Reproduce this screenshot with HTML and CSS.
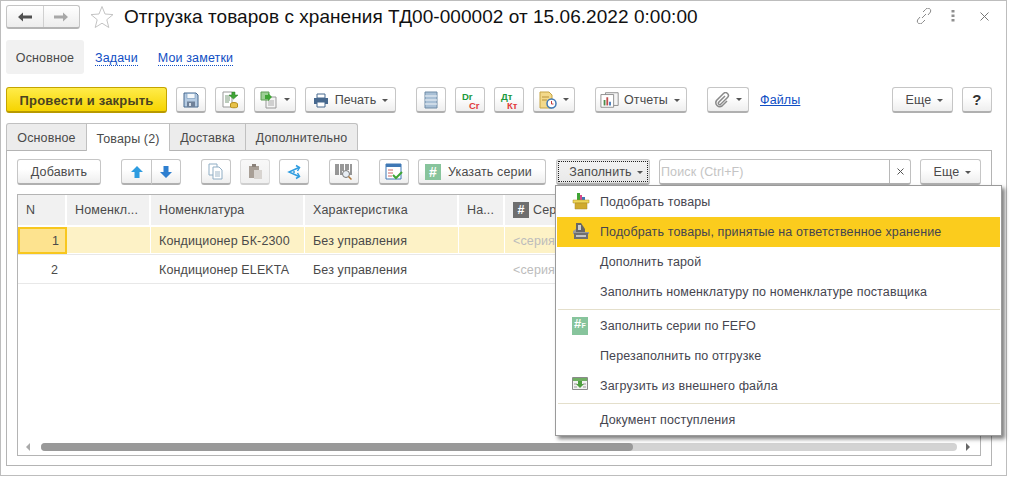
FILE: index.html
```html
<!DOCTYPE html>
<html lang="ru">
<head>
<meta charset="utf-8">
<title>Отгрузка товаров с хранения</title>
<link rel="stylesheet" href="styles.css">
</head>
<body>
<div class="window">
  <header class="head">
    <div class="nav">
      <button class="nav-b"><svg width="16" height="12" viewBox="0 0 16 12"><path d="M1 6l5-4.500V4.500h9v3H6v3z" fill="#505050"/></svg></button>
      <button class="nav-b"><svg width="16" height="12" viewBox="0 0 16 12"><path d="M15 6l-5-4.500V4.500H1v3h9v3z" fill="#a8a8a8"/></svg></button>
    </div>
    <svg class="star" width="24" height="24" viewBox="0 0 24 24"><path d="M12 1.500l3 7.500 8 .6-6.200 5.100 2 7.800L12 18.200 5.200 22.500l2-7.800L1 9.600l8-.6z" fill="#fff" stroke="#c4c4c4"/></svg>
    <h1 class="title">Отгрузка товаров с хранения ТД00-000002 от 15.06.2022 0:00:00</h1>
    <div class="head-tools">
      <svg width="16" height="16" viewBox="0 0 16 16" fill="none" stroke="#8a8a8a"><path d="M6 10l4-4M7 4l2.500-2.500a2.800 2.800 0 0 1 5 2.500L12 7M9 12l-2.500 2.500a2.800 2.800 0 0 1-5-2.500L4 9"/></svg>
      <svg class="dots" width="4" height="12" viewBox="0 0 4 12"><path d="M.5 0h3v2.500h-3zM.5 4.500h3V7h-3zM.5 9h3v2.500h-3z" fill="#8f8f8f"/></svg>
      <svg width="9" height="9" viewBox="0 0 9 9" stroke="#777" fill="none"><path d="M.5.500l8 8M8.500.500l-8 8"/></svg>
    </div>
  </header>

  <nav class="pages">
    <span class="page-cur">Основное</span>
    <a class="page-link page-a">Задачи</a>
    <a class="page-link page-b">Мои заметки</a>
  </nav>

  <div class="cmdbar">
    <button class="btn primary">Провести и закрыть</button>
    <button class="btn ico g9"><svg width="16" height="16" viewBox="0 0 16 16"><path d="M1 1h12l2 2v12H1z" fill="#b5cbe2" stroke="#47688e"/><path d="M4 1.500h8v5H4z" fill="#f4f8fb" stroke="#6f93bb" stroke-width=".6"/><path d="M4 9.500h8V15H4z" fill="#6f8199"/><path d="M6 11h2v3H6z" fill="#d5dee8"/></svg></button>
    <button class="btn ico g9"><svg width="18" height="18" viewBox="0 0 18 18"><path d="M2 1h9v15H2z" fill="#fff" stroke="#999"/><path d="M4 5h5M4 7h5M4 9h5M4 11h4" stroke="#7a9a7a"/><ellipse cx="13" cy="13" rx="3.500" ry="1.500" fill="#e8c24a" stroke="#b58f1c"/><path d="M9.500 13v3c0 1 7 1 7 0v-3" fill="#e8c24a" stroke="#b58f1c"/><path d="M9 1h3v3h3l-4.500 4L6 4h3z" fill="#3fa535" stroke="#2b7d24" stroke-width=".5" transform="translate(2 0)"/></svg></button>
    <button class="btn ico dd g9"><svg width="18" height="18" viewBox="0 0 18 18"><path d="M6 6h10v11H6z" fill="#f4f4f4" stroke="#999"/><path d="M8 10h6M8 12h6M8 14h6" stroke="#aaa"/><path d="M1 1h8v8H1z" fill="#9ccf94" stroke="#5f9d55"/><path d="M5 4h3V2l4 4-4 4V8H5z" fill="#3fa535"/></svg><i class="caret"></i></button>
    <button class="btn txt dd g9 w-print"><svg width="16" height="15" viewBox="0 0 16 15"><path d="M4 1h8v4H4z" fill="#fff" stroke="#47688e"/><path d="M1 5h14v6H1z" fill="#47688e"/><path d="M4 9h8v5H4z" fill="#fff" stroke="#47688e"/></svg>Печать<i class="caret"></i></button>
    <button class="btn ico g20"><svg width="14" height="18" viewBox="0 0 14 18"><path d="M1 1h12v16H1z" fill="#a9c0d6" stroke="#6f8ba6"/><path d="M1 5h12M1 9h12M1 13h12" stroke="#f2f6f9"/></svg></button>
    <button class="btn ico g9"><svg width="24" height="22" viewBox="0 0 24 22"><text class="dc g" x="4" y="10.500">Dr</text><text class="dc r" x="11" y="19.500">Cr</text></svg></button>
    <button class="btn ico g9"><svg width="24" height="22" viewBox="0 0 24 22"><text class="dc g" x="4" y="10.500">Дт</text><text class="dc r" x="10" y="19.500">Кт</text></svg></button>
    <button class="btn ico dd g9"><svg width="18" height="18" viewBox="0 0 18 18"><path d="M1 1h9l3 3v13H1z" fill="#f3d98a" stroke="#c6a444"/><path d="M3 6h7M3 9h5" stroke="#b8923a"/><circle cx="12.500" cy="12.500" r="4.500" fill="#fff" stroke="#3f78b5" stroke-width="1.500"/><path d="M12.500 10v3h2" stroke="#c43c3c" fill="none"/></svg><i class="caret"></i></button>
    <button class="btn txt dd g20 w-rep"><svg width="20" height="18" viewBox="0 0 22 18"><path d="M6 1h14v14H6z" fill="#f5f5f5" stroke="#8a8a8a"/><path d="M1 3h14v14H1z" fill="#fff" stroke="#8a8a8a"/><path d="M4 9h2v6H4z" fill="#4d8c4d"/><path d="M7 6h2v9H7z" fill="#c14d4d"/><path d="M10 11h2v4h-2z" fill="#3f78b5"/></svg>Отчеты<i class="caret"></i></button>
    <button class="btn ico dd g20"><svg width="16" height="16" viewBox="0 0 16 16" fill="none" stroke="#8a8a8a" stroke-width="1.500"><path d="M11 4L4.500 10.500a1.500 1.500 0 0 0 2 2L13.500 5.500a2.800 2.800 0 0 0-4-4L2.500 8.500a4 4 0 0 0 5.500 5.500L13 9"/></svg><i class="caret"></i></button>
    <a class="files">Файлы</a>
    <button class="btn txt dd more-top">Еще<i class="caret"></i></button>
    <button class="btn ico help">?</button>
  </div>

  <div class="tabs">
    <span class="tab t1">Основное</span>
    <span class="tab on t2">Товары (2)</span>
    <span class="tab t3">Доставка</span>
    <span class="tab t4">Дополнительно</span>
  </div>

  <section class="pane">
    <div class="toolbar">
      <button class="btn txt add">Добавить</button>
      <div class="split g20">
        <button class="btn ico"><svg width="14" height="14" viewBox="0 0 14 14"><path d="M7 1l6 6H9.500v6h-5V7H1z" fill="#2e9ce0"/></svg></button>
        <button class="btn ico"><svg width="14" height="14" viewBox="0 0 14 14"><path d="M7 13l6-6H9.500V1h-5v6H1z" fill="#2e7fd0"/></svg></button>
      </div>
      <button class="btn ico g20"><svg width="16" height="17" viewBox="0 0 16 17" fill="#fff" stroke="#8fadc4"><path d="M1 1h8v11H1z"/><path d="M5 4h6l3 3v9H5z"/><path d="M7 9h5M7 11h5M7 13h5" stroke="#9fb7c9"/></svg></button>
      <button class="btn ico g9 muted"><svg width="15" height="17" viewBox="0 0 15 17"><path d="M1 3h10v12H1z" fill="#a89f96"/><path d="M4 1h4v3H4z" fill="#8a8179"/><path d="M6 7h8v9H6z" fill="#d8d4d0"/></svg></button>
      <button class="btn ico g9"><svg width="16" height="16" viewBox="0 0 16 16" fill="none" stroke="#2e9ce0" stroke-width="1.500"><path d="M13 3.500L3 8l10 4.500"/><path d="M10 1.500l3.500 2-2 3.500M10 14.500l3.500-2-2-3.500"/><path d="M7 8h2" /></svg></button>
      <button class="btn ico g20"><svg width="18" height="18" viewBox="0 0 18 18"><path d="M1 1v11M3 1v11M6 1v11M8 1v7M11 1v6M13 1v6M16 1v11" stroke="#333" fill="none"/><circle cx="11" cy="11" r="3.500" fill="#e8eef4" stroke="#777"/><path d="M13.500 13.500l3 3" stroke="#b07a3c" stroke-width="1.500"/></svg></button>
      <button class="btn ico g20"><svg width="18" height="17" viewBox="0 0 18 17"><path d="M1 1h15v15H1z" fill="#fff" stroke="#3f78b5"/><path d="M1 1h15v3H1z" fill="#3f78b5"/><path d="M3 7h5M3 10h5M3 13h4" stroke="#c66"/><path d="M8 12l3 3 6-6" stroke="#3fa535" stroke-width="2" fill="none"/></svg></button>
      <button class="btn txt g9 series"><span class="hash">#</span>Указать серии</button>
      <button class="btn txt dd g10 fill"><span class="focus">Заполнить<i class="caret"></i></span></button>
      <div class="search g9">
        <span class="s-input">Поиск (Ctrl+F)</span>
        <span class="s-clear"><svg width="7" height="7" viewBox="0 0 7 7" stroke="#555" fill="none"><path d="M.5.500l6 6M6.500.500l-6 6"/></svg></span>
      </div>
      <button class="btn txt dd g9 more">Еще<i class="caret"></i></button>
    </div>

    <div class="grid">
      <div class="row hdr">
        <div class="c c1">N</div><div class="c c2">Номенкл...</div><div class="c c3">Номенклатура</div><div class="c c4">Характеристика</div><div class="c c5">На...</div><div class="c c6"><span class="hash-g">#</span>Серия</div>
      </div>
      <div class="row sel">
        <div class="c c1 num cur">1</div><div class="c c2"></div><div class="c c3">Кондиционер БК-2300</div><div class="c c4">Без управления</div><div class="c c5"></div><div class="c c6 ph">&lt;серия&gt;</div>
      </div>
      <div class="row">
        <div class="c c1 num">2</div><div class="c c2"></div><div class="c c3">Кондиционер ELEKTA</div><div class="c c4">Без управления</div><div class="c c5"></div><div class="c c6 ph">&lt;серия&gt;</div>
      </div>
      <div class="grid-fill"></div>
      <div class="hscroll">
        <i class="arr l"></i>
        <div class="track"><div class="thumb"></div></div>
        <i class="arr r"></i>
      </div>
    </div>
  </section>

  <div class="menu">
    <div class="mi"><svg class="mic" width="18" height="18" viewBox="0 0 18 18"><path d="M5 0h3v8H5z" fill="#3fa535"/><path d="M8 2h2v6H8z" fill="#d84a8a"/><path d="M10 4h3v4h-3z" fill="#3f78b5"/><path d="M1 7h16v3H1z" fill="#efd858" stroke="#a8892a" stroke-width=".5"/><path d="M3 10h12v6H3z" fill="#d0aa2e" stroke="#a8892a" stroke-width=".5"/></svg>Подобрать товары</div>
    <div class="mi hot"><svg class="mic" width="18" height="18" viewBox="0 0 18 18"><path d="M4 0h5l4 6v3H4z" fill="#666"/><path d="M6 2h3v5H6z" fill="#ccc"/><path d="M1 8l3-2v3h13v2H1z" fill="#9a9a9a"/><path d="M2 10h14v6H2z" fill="#6f6f6f"/><path d="M4 12h10v2H4z" fill="#c4c4c4"/></svg>Подобрать товары, принятые на ответственное хранение</div>
    <div class="mi">Дополнить тарой</div>
    <div class="mi">Заполнить номенклатуру по номенклатуре поставщика</div>
    <div class="msep"></div>
    <div class="mi"><span class="mic fefo">#<b>F</b></span>Заполнить серии по FEFO</div>
    <div class="mi">Перезаполнить по отгрузке</div>
    <div class="mi"><svg class="mic" width="16" height="13" viewBox="0 0 16 13"><path d="M.5.500h15v12H.5z" fill="#f2f2f2" stroke="#8a8a8a"/><path d="M1 1h14v3H1z" fill="#6fae62"/><path d="M2 7h3M2 10h3M11 7h3M11 10h3" stroke="#999"/><path d="M6 4h4v3h2l-4 4-4-4h2z" fill="#4e9e3f"/></svg>Загрузить из внешнего файла</div>
    <div class="msep"></div>
    <div class="mi">Документ поступления</div>
  </div>
</div>
</body>
</html>
```
FILE: styles.css
```css
* { box-sizing: border-box; }
html, body { margin: 0; padding: 0; background: #fff; }
body { width: 1010px; height: 479px; overflow: hidden; font: 12.5px "Liberation Sans", Arial, sans-serif; color: #4a4a4a; letter-spacing: .13px; }
button { font: inherit; color: inherit; letter-spacing: inherit; margin: 0; }
.window { position: relative; width: 1007px; height: 476px; border: 1px solid #bdbdbd; }

.head { display: flex; align-items: flex-start; height: 34px; padding: 4px 0 0 5px; }
.nav { display: flex; width: 74px; height: 24px; border: 1px solid #c4c4c4; border-bottom: 2px solid #b4b4b4; border-radius: 3px; background: linear-gradient(#fff, #ededed); }
.nav-b { flex: 1; border: 0; background: none; padding: 0; display: flex; align-items: center; justify-content: center; }
.nav-b + .nav-b { border-left: 1px solid #d0d0d0; }
.star { margin-left: 10px; }
.title { margin: 1px 0 0 10px; font-weight: 400; font-size: 19px; line-height: 22px; letter-spacing: .05px; color: #111; white-space: nowrap; }
.head-tools { margin-left: auto; display: flex; align-items: center; height: 22px; padding-right: 17px; }
.dots { margin: 0 25px 0 19px; }

.pages { display: flex; align-items: center; height: 34px; margin: 5px 0 0 5px; }
.page-cur { width: 78px; height: 34px; padding-top: 1px; background: #f1f1f1; border-radius: 3px; display: flex; align-items: center; justify-content: center; }
.page-link { color: #0f4ec4; border-bottom: 1px dotted #0f4ec4; line-height: 14px; margin-top: 2px; }
.page-a { margin-left: 11px; }
.page-b { margin-left: 20px; }

.btn { display: inline-flex; align-items: center; justify-content: center; height: 26px; padding: 0; flex: none; border: 1px solid #c6c6c6; border-bottom: 2px solid #b0b0b0; border-radius: 3px; background: linear-gradient(#fff 40%, #eeeeee); }
.txt { padding-top: 1px; }
.ico { width: 30px; }
.ico.dd { width: 42px; }
.caret { display: inline-block; width: 0; height: 0; margin-left: 6px; border: 3px solid transparent; border-top: 3px solid #555; border-bottom: 0; }
.g9 { margin-left: 9px; }
.g10 { margin-left: 10px; }
.g20 { margin-left: 20px; }

.cmdbar { display: flex; align-items: center; height: 26px; margin: 13px 0 0 5px; }
.primary { width: 161px; padding-top: 1px; border: 1px solid #c4a400; border-bottom: 2px solid #b89a00; background: linear-gradient(#ffec4a, #f6d400); font-weight: 700; font-size: 13px; letter-spacing: .2px; color: #4a4320; }
.w-print { width: 91px; }
.w-print svg { margin-right: 6px; }
.w-rep { width: 92px; justify-content: flex-start; padding-left: 4px; }
.w-rep svg { margin-right: 4px; }
.files { margin-left: 11px; color: #0f4ec4; text-decoration: underline; }
.more-top { width: 61px; margin-left: auto; padding-left: 4px; }
.help { margin: 0 14px 0 9px; font-weight: 700; font-size: 15px; color: #333; }
.dc { font: 700 9.500px "Liberation Sans", Arial, sans-serif; letter-spacing: 0; }
.dc.g { fill: #1a9a3c; }
.dc.r { fill: #e23b3b; }

.tabs { display: flex; height: 27px; margin: 10px 0 0 5px; }
.tab { display: flex; align-items: center; justify-content: center; height: 27px; padding-top: 2px; background: #ececec; border: 1px solid #c0c0c0; border-bottom: 0; margin-left: -1px; }
.tab:first-child { margin-left: 0; }
.t1 { width: 81px; border-radius: 3px 0 0 0; }
.t2 { width: 84px; }
.t3 { width: 77px; }
.t4 { width: 113px; border-radius: 0 3px 0 0; }
.tab.on { background: #fff; position: relative; height: 28px; z-index: 1; }

.pane { margin-left: 5px; width: 986px; height: 316px; border: 1px solid #b4b4b4; padding: 8px 10px 9px 10px; display: flex; flex-direction: column; }
.toolbar { display: flex; align-items: center; height: 26px; }
.add { width: 84px; }
.split { display: flex; }
.split .btn { border-radius: 0 3px 3px 0; margin-left: -1px; }
.split .btn:first-child { border-radius: 3px 0 0 3px; margin-left: 0; width: 31px; }
.muted { background: linear-gradient(#f8f8f8, #f0f0f0); border-color: #dcdcdc; border-bottom-color: #cfcfcf; }
.series { width: 128px; justify-content: flex-start; padding-left: 6px; }
.hash { width: 16px; height: 16px; margin-right: 7px; background: #87c49c; color: #fff; font-weight: 700; font-size: 14px; line-height: 16px; text-align: center; }
.fill { width: 94px; padding: 1px; background: linear-gradient(#e9e9e9, #dfdfdf); }
.focus { display: flex; align-items: center; justify-content: center; width: 100%; height: 100%; padding: 1px 0 0 6px; border: 1px dotted #222; background: linear-gradient(#f2f2f2, #e9e9e9); }
.focus .caret { margin-left: 5px; }
.search { display: flex; width: 252px; height: 26px; border: 1px solid #c0c0c0; border-bottom: 2px solid #b0b0b0; border-radius: 3px; background: #fff; }
.s-input { flex: 1; padding-left: 1px; color: #c4c4c4; line-height: 24px; }
.s-clear { width: 21px; display: flex; align-items: center; justify-content: center; border-left: 1px solid #b8b8b8; }
.more { width: 61px; padding-left: 4px; }

.grid { flex: 1; margin-top: 9px; border: 1px solid #b4b4b4; display: flex; flex-direction: column; }
.row { display: grid; grid-template-columns: 49px 84px 154px 154px 46px 1fr; height: 29px; border-bottom: 1px solid #e8e8e8; align-items: stretch; }
.c { display: flex; align-items: center; padding: 1px 7px 0 8px; white-space: nowrap; overflow: hidden; border-right: 1px solid #fff; }
.hdr { height: 32px; border-bottom: 2px solid #fff; }
.hdr .c { background: #f1f1f1; padding: 0 4px 0 8px; border-right: 2px solid #fff; }
.sel { height: 28px; }
.sel .c { background: #fdf2c6; border-bottom: 1px solid #fff; border-right: 1px solid #fff; }
.num { justify-content: flex-end; padding-right: 8px; }
.sel .cur { background: #fde38f; border: 2px solid #f8c71e; padding-right: 6px; }
.ph { color: #bcbcbc; }
.hash-g { width: 16px; height: 16px; background: #6e6e6e; color: #fff; font-weight: 700; text-align: center; line-height: 16px; margin-right: 4px; }
.grid-fill { flex: 1; }
.hscroll { display: flex; align-items: center; height: 8px; margin-bottom: 4px; padding: 0 9px 0 8px; }
.track { width: 916px; height: 8px; margin: 0 9px 0 11px; background: #d3d3d3; border-radius: 4px; }
.thumb { width: 592px; height: 8px; background: #999; border-radius: 4px; }
.arr { width: 0; height: 0; border: 4px solid transparent; }
.arr.l { border-right: 4px solid #aaa; border-left: 0; }
.arr.r { border-left: 4px solid #666; border-right: 0; }

.menu { position: absolute; left: 554px; top: 184px; width: 447px; height: 251px; padding: 1px; background: #fff; border: 1px solid #9a9a9a; box-shadow: 3px 3px 4px rgba(0, 0, 0, .5); }
.mi { display: flex; align-items: center; height: 30px; padding-left: 43px; position: relative; color: #45454f; white-space: nowrap; }
.mi.hot { background: #fbcc1d; }
.mic { position: absolute; left: 15px; top: 6px; }
.msep { height: 2px; margin: 2px 0 0 1px; border-top: 1px solid #e4dfcb; }
.fefo { width: 16px; height: 18px; background: #87c49c; color: #fff; font-weight: 700; font-size: 13px; line-height: 14px; padding-left: 2px; }
.fefo b { font-size: 7px; }
```
